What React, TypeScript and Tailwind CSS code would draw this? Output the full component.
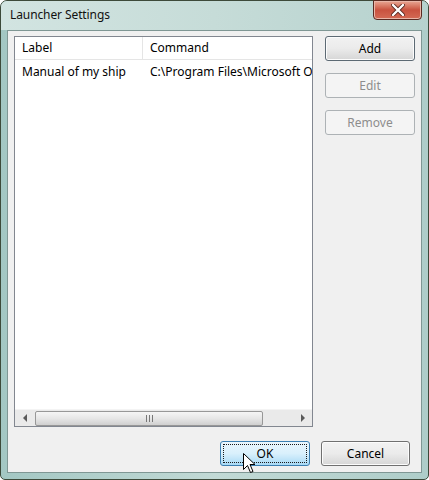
import React from 'react';

const font = { fontFamily: '"Noto Sans", "Open Sans", sans-serif' };

const Button: React.FC<{ label: string; variant?: 'default' | 'normal' | 'disabled' | 'focused'; className?: string }> = ({
  label,
  variant = 'normal',
  className = '',
}) => {
  if (variant === 'disabled') {
    return (
      <div className={`h-[25px] rounded-[3px] border border-[#adb2b5] bg-[#f4f4f4] flex items-center justify-center text-[12px] text-[#8d8d8d] ${className}`}>
        {label}
      </div>
    );
  }
  if (variant === 'focused') {
    return (
      <div className={`h-[25px] rounded-[3px] border border-[#3c7fb1] p-[2px] bg-gradient-to-b from-[#eaf6fd] via-[#d9f0fc] to-[#a7d9f5] ${className}`}>
        <div className="h-full border border-dotted border-[#1a1a1a] flex items-center justify-center text-[12px] text-black">
          {label}
        </div>
      </div>
    );
  }
  return (
    <div
      className={`h-[25px] rounded-[3px] border ${variant === 'default' ? 'border-[#5d6a74]' : 'border-[#707070]'} bg-gradient-to-b from-[#f2f2f2] via-[#ebebeb] to-[#d6d6d6] shadow-[inset_0_0_0_1px_#fcfcfc] flex items-center justify-center text-[12px] text-black ${className}`}
    >
      {label}
    </div>
  );
};

const App: React.FC = () => {
  return (
    <div className="w-[429px] h-[480px] bg-white" style={font}>
      <div className="relative w-[429px] h-[480px] rounded-t-[7px] rounded-b-[5px] border border-[#3d4a3a] bg-gradient-to-r from-[#a3c7c3] via-[#c2dad6] to-[#aecdc9] flex flex-col">
        {/* Title bar */}
        <div className="h-[29px] flex items-start pl-[9px] relative bg-gradient-to-r from-[#d2e4e1] via-[#c6dcd8] to-[#b6d2ce] rounded-t-[6px]">
          <span className="mt-[5px] text-[12px] text-[#111] tracking-[-0.1px]">Launcher Settings</span>
          {/* Close button */}
          <div className="absolute left-[372px] top-[-1px] w-[49px] h-[20px] rounded-b-[4px] border border-[#5a2a22] bg-gradient-to-b from-[#e8a795] via-[#c9523f] to-[#d46a55] flex items-center justify-center shadow-[inset_0_0_0_1px_#e9b6a8]">
            <svg width="14" height="12" viewBox="0 0 14 12">
              <path d="M2 1 L12 11 M12 1 L2 11" stroke="#5a2a22" strokeWidth="4" strokeLinecap="round" />
              <path d="M2 1 L12 11 M12 1 L2 11" stroke="#ffffff" strokeWidth="2.4" strokeLinecap="round" />
            </svg>
          </div>
        </div>

        {/* Client area */}
        <div className="ml-[6px] mr-[6px] mb-[6px] flex-1 border border-[#7f9794] bg-[#f0f0f0] flex flex-col px-[6px] pt-[5px] pb-[6px]">
          <div className="flex gap-[12px]">
            {/* List view */}
            <div className="w-[299px] h-[391px] border border-[#828790] bg-white flex flex-col">
              <div className="flex h-[23px] border-b border-[#e5e5e5] text-[12px] text-black">
                <div className="w-[128px] border-r border-[#e5e5e5] pl-[7px] flex items-center">Label</div>
                <div className="flex-1 pl-[7px] flex items-center">Command</div>
              </div>
              <div className="flex h-[24px] text-[12px] text-black whitespace-nowrap overflow-hidden">
                <div className="w-[128px] pl-[7px] flex items-center shrink-0">Manual of my ship</div>
                <div className="flex-1 pl-[7px] flex items-center overflow-hidden">C:\Program Files\Microsoft Office</div>
              </div>
              <div className="flex-1" />
              {/* Horizontal scrollbar */}
              <div className="h-[17px] bg-[#eaeaea] border-t border-[#f4f4f4] flex items-center">
                <div className="w-[20px] flex items-center justify-center">
                  <svg width="5" height="8" viewBox="0 0 5 8"><path d="M4 0 L0 4 L4 8 Z" fill="#5a5a5a" /></svg>
                </div>
                <div className="w-[228px] h-[15px] rounded-[2px] border border-[#979797] bg-gradient-to-b from-[#f5f5f5] via-[#e6e6e6] to-[#d0d0d0] flex items-center justify-center gap-[2px]">
                  <span className="w-[1px] h-[7px] bg-[#777]" />
                  <span className="w-[1px] h-[7px] bg-[#777]" />
                  <span className="w-[1px] h-[7px] bg-[#777]" />
                </div>
                <div className="flex-1" />
                <div className="w-[19px] flex items-center justify-center">
                  <svg width="5" height="8" viewBox="0 0 5 8"><path d="M1 0 L5 4 L1 8 Z" fill="#5a5a5a" /></svg>
                </div>
              </div>
            </div>

            {/* Side buttons */}
            <div className="w-[90px] flex flex-col gap-[12px]">
              <Button label="Add" variant="default" />
              <Button label="Edit" variant="disabled" />
              <Button label="Remove" variant="disabled" />
            </div>
          </div>

          <div className="flex-1" />

          {/* Bottom buttons */}
          <div className="flex justify-end gap-[11px] pr-[5px]">
            <Button label="OK" variant="focused" className="w-[90px]" />
            <Button label="Cancel" className="w-[89px]" />
          </div>
        </div>

        {/* Mouse cursor */}
        <svg className="absolute left-[242px] top-[452px]" width="13" height="21" viewBox="0 0 13 21">
          <path d="M0.5 0.5 L0.5 16.5 L4.5 12.5 L7.5 19.5 L10 18.5 L7 11.5 L12 11.5 Z" fill="#ffffff" stroke="#000000" strokeWidth="1" strokeLinejoin="round" />
        </svg>
      </div>
    </div>
  );
};

export default App;
